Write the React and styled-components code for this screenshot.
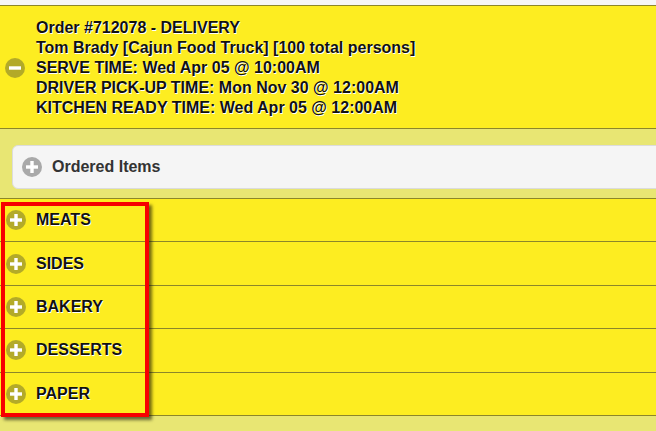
import React from "react";
import styled, { createGlobalStyle } from "styled-components";

const GlobalStyle = createGlobalStyle`
  html, body {
    margin: 0;
    padding: 0;
    background: #f6f6f6;
    overflow: hidden;
    font-family: "Liberation Sans", Arial, sans-serif;
  }
`;

const categories = ["MEATS", "SIDES", "BAKERY", "DESSERTS", "PAPER"];

const orderLines = [
  "Order #712078 - DELIVERY",
  "Tom Brady [Cajun Food Truck] [100 total persons]",
  "SERVE TIME: Wed Apr 05 @ 10:00AM",
  "DRIVER PICK-UP TIME: Mon Nov 30 @ 12:00AM",
  "KITCHEN READY TIME: Wed Apr 05 @ 12:00AM",
];

const ToggleIcon = ({ open, color = "#b3aa28", size = 20 }) => (
  <svg width={size} height={size} viewBox="0 0 20 20">
    <circle cx="10" cy="10" r="10" fill={color} />
    <rect x="4" y="8.3" width="12" height="3.4" fill="#fff" />
    {!open && <rect x="8.3" y="4" width="3.4" height="12" fill="#fff" />}
  </svg>
);

const App = () => {
  return (
    <Page>
      <GlobalStyle />
      <OrderHeader>
        <IconSlot>
          <ToggleIcon open />
        </IconSlot>
        <OrderText>
          {orderLines.map((line) => (
            <div key={line}>{line}</div>
          ))}
        </OrderText>
      </OrderHeader>

      <ItemsWrap>
        <ItemsPanel>
          <ToggleIcon color="#a9a9a9" />
          <ItemsTitle>Ordered Items</ItemsTitle>
        </ItemsPanel>
      </ItemsWrap>

      <CategoryList>
        {categories.map((name) => (
          <CategoryRow key={name}>
            <ToggleIcon />
            <CategoryName>{name}</CategoryName>
          </CategoryRow>
        ))}
        <Highlight />
      </CategoryList>
    </Page>
  );
};

const Page = styled.div`
  width: 656px;
  height: 431px;
  padding-top: 5px;
  box-sizing: border-box;
  background: #e8e673;
  box-shadow: inset 0 5px 0 #f6f6f6;
`;

const OrderHeader = styled.div`
  display: flex;
  align-items: center;
  height: 124px;
  box-sizing: border-box;
  padding: 1px 0 0 5px;
  background: #fded21;
  border-top: 1px solid #8c862a;
  border-bottom: 1px solid #8c862a;
`;

const IconSlot = styled.div`
  display: flex;
  width: 31px;
  margin-top: 1px;
`;

const OrderText = styled.div`
  font-size: 16px;
  font-weight: bold;
  line-height: 20px;
  color: #111;
  text-shadow: 1px 1px 0 #fff;
`;

const ItemsWrap = styled.div`
  padding: 16px 0 9px 12px;
  background: #e8e673;
`;

const ItemsPanel = styled.div`
  display: flex;
  align-items: center;
  gap: 10px;
  height: 44px;
  box-sizing: border-box;
  margin-right: -10px;
  padding-left: 9px;
  background: #f5f5f5;
  border: 1px solid #dcdcdc;
  border-radius: 6px;
`;

const ItemsTitle = styled.span`
  font-size: 16px;
  font-weight: bold;
  color: #333;
`;

const CategoryList = styled.div`
  position: relative;
  border-top: 1px solid #8c862a;
`;

const CategoryRow = styled.div`
  display: flex;
  align-items: center;
  gap: 10px;
  height: 42.4px;
  padding-left: 6px;
  background: #fded21;
  border-bottom: 1px solid #8c862a;
`;

const CategoryName = styled.span`
  font-size: 16px;
  font-weight: bold;
  color: #111;
  text-shadow: 1px 1px 0 #fff;
`;

const Highlight = styled.div`
  position: absolute;
  left: 1px;
  top: 3px;
  width: 148px;
  height: 215px;
  box-sizing: border-box;
  border: 4px solid #f70000;
  box-shadow: 3px 3px 3px rgba(0, 0, 0, 0.55);
  pointer-events: none;
`;

export default App;
